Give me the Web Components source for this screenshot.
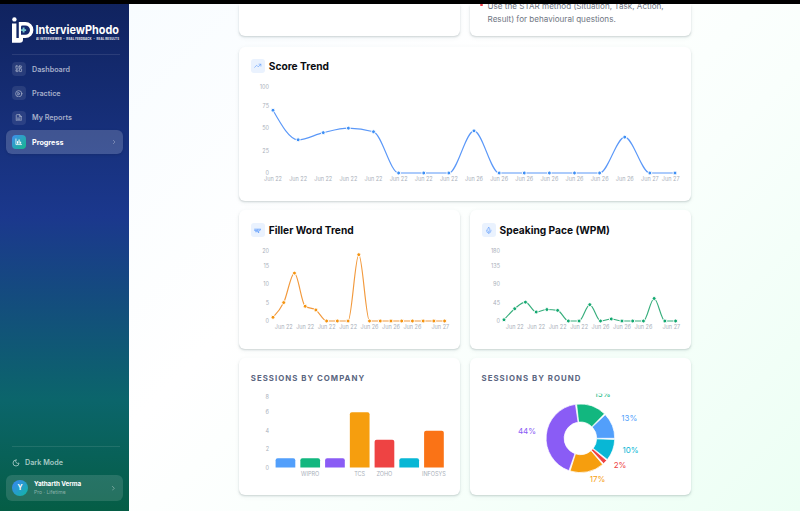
<!DOCTYPE html>
<html lang="en">
<head>
<meta charset="utf-8">
<title>InterviewPhodo</title>
<style>
  body {
    margin: 0;
    width: 800px;
    height: 511px;
    overflow: hidden;
    font-family: Inter, "Liberation Sans", sans-serif;
    background: #000;
  }
</style>
</head>
<body>
<progress-page></progress-page>

<script>
const COLORS = {
  blue: '#529ffb', green: '#12b77f', purple: '#8a5cf5', amber: '#f69e0e',
  red: '#ee4343', cyan: '#08b7d5', orange: '#fa7316'
};

const ICONS = {
  grid: '<rect x="3" y="3" width="7" height="9" rx="1"/><rect x="14" y="3" width="7" height="5" rx="1"/><rect x="14" y="12" width="7" height="9" rx="1"/><rect x="3" y="16" width="7" height="5" rx="1"/>',
  play: '<circle cx="12" cy="12" r="10"/><path d="M10 8l6 4-6 4z"/>',
  file: '<path d="M14 2H6a2 2 0 0 0-2 2v16a2 2 0 0 0 2 2h12a2 2 0 0 0 2-2V8z"/><path d="M14 2v6h6M8 13h8M8 17h8"/>',
  chart: '<path d="M3 3v18h18"/><path d="M8 17v-6M13 17V6M18 17v-4" stroke-width="3.4"/>',
  chevron: '<path d="M9 5l7 7-7 7"/>',
  moon: '<path d="M12 3a6.5 6.5 0 0 0 9 9 9 9 0 1 1-9-9z"/>',
  trend: '<path d="M22 7l-8.5 8.5-5-5L2 17"/><path d="M16 7h6v6"/>',
  filler: '<path d="M2 7h19M2 11h8M12 9v5l3 5v-7l6-3M5 15h5" stroke-width="2.6"/>',
  mic: '<path d="M12 2a3 3 0 0 0-3 3v7a3 3 0 0 0 6 0V5a3 3 0 0 0-3-3z"/><path d="M19 10v2a7 7 0 0 1-14 0v-2M12 19v3"/>'
};

function icon(name, size, width = 2) {
  return `<svg width="${size}" height="${size}" viewBox="0 0 24 24" fill="none" stroke="currentColor"
    stroke-width="${width}" stroke-linecap="round" stroke-linejoin="round">${ICONS[name]}</svg>`;
}

class BrandLogo extends HTMLElement {
  constructor() {
    super();
    this.attachShadow({ mode: 'open' });
    this.shadowRoot.innerHTML = `
      <style>
        :host { display: block; height: 28px; }
        svg { display: block; overflow: visible; }
        text { font-family: Inter, "Liberation Sans", sans-serif; fill: #fff; }
      </style>
      <svg width="111" height="28" viewBox="0 0 111 28">
        <circle cx="2.4" cy="3.4" r="2.2" fill="#fff"/>
        <path d="M0 7.5h4.4v14.6h2.4V6h6.6a7.9 7.9 0 0 1 0 16H11v1.5a3.2 3.2 0 0 1-3.2 3.2H0z" fill="#fff"/>
        <path d="M10.4 9.4h2.9a4.7 4.7 0 0 1 0 9.4H9V10.8a1.4 1.4 0 0 1 1.4-1.4z" fill="#14296e"/>
        <path d="M11.6 11.6v5M9.1 14.1h5" stroke="#79c9d2" stroke-width="1.9"/>
        <text x="23.4" y="18.3" font-size="12" font-weight="700" textLength="83.6" lengthAdjust="spacingAndGlyphs">InterviewPhodo</text>
        <text x="24" y="24.3" font-size="2.8" font-weight="800" opacity=".85" textLength="83" xml:space="preserve">AI INTERVIEWER  •  REAL FEEDBACK  •  REAL RESULTS</text>
      </svg>
    `;
  }
}
customElements.define('brand-logo', BrandLogo);

class NavItem extends HTMLElement {
  connectedCallback() {
    this.attachShadow({ mode: 'open' });
    this.shadowRoot.innerHTML = `
      <style>
        :host {
          display: flex; align-items: center; gap: 6px;
          box-sizing: border-box; height: 24.3px; padding: 0 6px; border-radius: 6px;
          font-size: 7.2px; font-weight: 600; color: #a6afca;
        }
        :host([active]) { background: rgba(255,255,255,.18); color: #fff; box-shadow: 0 1px 3px rgba(0,0,0,.12); font-weight: 700; }
        .box {
          width: 14px; height: 14px; border-radius: 4px;
          display: flex; align-items: center; justify-content: center;
          background: rgba(255,255,255,.09);
        }
        :host([active]) .box { background: linear-gradient(135deg, #3f8df0, #16b98a); }
        .label { flex: 1; }
        .chev { display: flex; opacity: .55; }
      </style>
      <span class="box">${icon(this.getAttribute('icon'), 7.5, 2.4)}</span>
      <span class="label"><slot></slot></span>
      ${this.hasAttribute('active') ? `<span class="chev">${icon('chevron', 6)}</span>` : ''}
    `;
  }
}
customElements.define('nav-item', NavItem);

class UserChip extends HTMLElement {
  connectedCallback() {
    this.attachShadow({ mode: 'open' });
    this.shadowRoot.innerHTML = `
      <style>
        :host {
          display: flex; align-items: center; gap: 6px;
          box-sizing: border-box; height: 26.5px; padding: 0 6px; border-radius: 6px;
          background: rgba(255,255,255,.13); color: #fff;
        }
        .avatar {
          width: 16px; height: 16px; border-radius: 50%;
          display: flex; align-items: center; justify-content: center;
          background: linear-gradient(135deg, #3b82f6, #10b9a0);
          font-size: 7px; font-weight: 700;
        }
        .who { flex: 1; display: flex; flex-direction: column; }
        .name { font-size: 6.3px; line-height: 8px; font-weight: 700; letter-spacing: -.07px; }
        .plan { font-size: 5.1px; line-height: 8px; color: rgba(255,255,255,.45); }
        .chev { display: flex; opacity: .65; margin-right: 1px; }
      </style>
      <span class="avatar">${this.getAttribute('initial')}</span>
      <span class="who">
        <span class="name"><slot></slot></span>
        <span class="plan">${this.getAttribute('plan')}</span>
      </span>
      <span class="chev">${icon('chevron', 6.5)}</span>
    `;
  }
}
customElements.define('user-chip', UserChip);

class SideBar extends HTMLElement {
  constructor() {
    super();
    this.attachShadow({ mode: 'open' });
    this.shadowRoot.innerHTML = `
      <style>
        :host {
          box-sizing: border-box;
          display: flex; flex-direction: column; width: 129.3px; flex: none;
          padding: 12.5px 6px 10px;
          background: linear-gradient(180deg, #10235f 0%, #1b388d 42%, #0b656b 78%, #055d45 100%);
        }
        brand-logo { margin: 0 6px; }
        hr { border: 0; height: 1px; width: 108px; margin: 0 0 0 6px; background: rgba(255,255,255,.1); }
        .top { margin-top: 10px; }
        nav { display: flex; flex-direction: column; margin-top: 2px; flex: 1; }
        .theme {
          box-sizing: border-box;
          display: flex; align-items: center; gap: 5px; height: 28px; padding: 4px 0 0 6px;
          color: #a5c9c4; font-size: 7.2px; font-weight: 600;
        }
      </style>
      <brand-logo></brand-logo>
      <hr class="top">
      <nav>
        <nav-item icon="grid">Dashboard</nav-item>
        <nav-item icon="play">Practice</nav-item>
        <nav-item icon="file">My Reports</nav-item>
        <nav-item icon="chart" active>Progress</nav-item>
      </nav>
      <hr>
      <div class="theme">${icon('moon', 8, 2.6)}<span>Dark Mode</span></div>
      <user-chip initial="Y" plan="Pro · Lifetime">Yatharth Verma</user-chip>
    `;
  }
}
customElements.define('side-bar', SideBar);

class DashCard extends HTMLElement {
  connectedCallback() {
    this.attachShadow({ mode: 'open' });
    const heading = this.getAttribute('heading');
    const caption = this.getAttribute('caption');
    const name = this.getAttribute('icon');
    this.shadowRoot.innerHTML = `
      <style>
        :host {
          box-sizing: border-box;
          display: block; flex: 1; min-width: 0; padding: 12px; border-radius: 6px;
          background: #fff;
          box-shadow: 0 1.8px 2px -.9px rgba(15,40,50,.17), 0 1.5px 5px rgba(20,80,80,.055);
        }
        header { display: flex; align-items: center; gap: 4px; height: 14px; }
        .box {
          width: 14px; height: 14px; border-radius: 3px; background: #eaf2fe; color: #649ffb;
          display: flex; align-items: center; justify-content: center;
        }
        h2 { margin: 0; font-size: 10.2px; font-weight: 650; color: #0b0d12; white-space: nowrap; }
        h3 { margin: 0; font-size: 7.8px; line-height: 14px; font-weight: 700; letter-spacing: 1.03px; color: #5a6580; text-transform: uppercase; white-space: nowrap; }
        .body { margin-top: 6px; }
        h3 + .body { margin-top: 4.5px; }
        .plain { margin-top: 0; }
      </style>
      ${heading ? `<header><span class="box">${icon(name, 7.5)}</span><h2>${heading}</h2></header>` : ''}
      ${caption ? `<h3>${caption}</h3>` : ''}
      <div class="body ${heading || caption ? '' : 'plain'}"><slot></slot></div>
    `;
  }
}
customElements.define('dash-card', DashCard);

const CHART_STYLE = `
  :host { display: block; }
  svg { display: block; }
  text { font-family: Inter, "Liberation Sans", sans-serif; }
  .tick { font-size: 5.5px; fill: #a9afba; }
`;

// Monotone cubic through evenly spaced points
function monotonePath(pts) {
  const n = pts.length;
  const h = pts[1][0] - pts[0][0];
  const slope = i => (pts[i + 1][1] - pts[i][1]) / h;
  const m = pts.map((p, i) => {
    if (i === 0 || i === n - 1) return 0;
    const a = slope(i - 1), b = slope(i);
    return (Math.sign(a) + Math.sign(b)) * Math.min(Math.abs(a), Math.abs(b), 0.25 * Math.abs(a + b)) || 0;
  });
  m[0] = (3 * slope(0) - m[1]) / 2;
  m[n - 1] = (3 * slope(n - 2) - m[n - 2]) / 2;
  let d = `M${pts[0]}`;
  for (let i = 0; i < n - 1; i++) {
    const [x0, y0] = pts[i], [x1, y1] = pts[i + 1];
    d += `C${x0 + h / 3},${y0 + m[i] * h / 3} ${x1 - h / 3},${y1 - m[i + 1] * h / 3} ${x1},${y1}`;
  }
  return d;
}

function yTicks(ticks, max, top, bottom) {
  return ticks.map(t => {
    let y = bottom - (bottom - top) * t / max;
    // top label is kept inside the drawing area
    if (t === max) y += 3.4;
    return `<text class="tick" x="18" y="${y + 2}" text-anchor="end">${t}</text>`;
  }).join('');
}

class LineChart extends HTMLElement {
  connectedCallback() {
    this.attachShadow({ mode: 'open' });
    const values = JSON.parse(this.getAttribute('values'));
    const ticks = JSON.parse(this.getAttribute('ticks'));
    const labels = JSON.parse(this.getAttribute('labels'));
    const color = this.getAttribute('color');
    const w = +this.getAttribute('width');
    const bottom = +this.getAttribute('base');
    const top = 4.3, left = 22, right = w - 4;
    const max = ticks[ticks.length - 1];
    const pts = values.map((v, i) => [
      left + (right - left) * i / (values.length - 1),
      bottom - (bottom - top) * v / max
    ]);
    this.shadowRoot.innerHTML = `
      <style>${CHART_STYLE}</style>
      <svg width="${w}" height="${bottom + 14}" viewBox="0 0 ${w} ${bottom + 14}" overflow="visible">
        ${yTicks(ticks, max, top, bottom)}
        ${labels.map(([i, t]) => {
          const x = i === values.length - 1 ? right - 4.3 : pts[i][0];
          return `<text class="tick" x="${x}" y="${bottom + 8}" text-anchor="middle">${t}</text>`;
        }).join('')}
        <path d="${monotonePath(pts)}" fill="none" stroke="${color}" stroke-width="1.15"/>
        ${pts.map(p => `<circle cx="${p[0]}" cy="${p[1]}" r="1.95" fill="${this.getAttribute('dot')}" stroke="#fff" stroke-width=".95"/>`).join('')}
      </svg>
    `;
  }
}
customElements.define('line-chart', LineChart);

class BarChart extends HTMLElement {
  connectedCallback() {
    this.attachShadow({ mode: 'open' });
    const bars = [
      ['', 1, COLORS.blue], ['WIPRO', 1, COLORS.green], ['', 1, COLORS.purple], ['TCS', 6, COLORS.amber],
      ['ZOHO', 3, COLORS.red], ['', 1, COLORS.cyan], ['INFOSYS', 4, COLORS.orange]
    ];
    const top = 3.8, bottom = 77.5, left = 22, band = 24.75, bw = 19.7;
    this.shadowRoot.innerHTML = `
      <style>${CHART_STYLE}</style>
      <svg width="197" height="92" viewBox="0 0 197 92" overflow="visible">
        ${yTicks([0, 2, 4, 6, 8], 8, top, bottom)}
        ${bars.map(([label, v, c], i) => {
          const x = left + band * i + 2.6, h = (bottom - top) * v / 8;
          return `<path d="M${x} ${bottom}v${2 - h}a2 2 0 0 1 2-2h${bw - 4}a2 2 0 0 1 2 2v${h - 2}z" fill="${c}"/>
            <text class="tick" x="${x + bw / 2}" y="${bottom + 8}" text-anchor="middle">${label}</text>`;
        }).join('')}
      </svg>
    `;
  }
}
customElements.define('bar-chart', BarChart);

class DonutChart extends HTMLElement {
  connectedCallback() {
    this.attachShadow({ mode: 'open' });
    // sessions, colour, label position
    const slices = [
      [6, COLORS.blue, '13%', 147.4, 31], [7, COLORS.green, '15%', 120.6, 7],
      [21, COLORS.purple, '44%', 45, 43.8], [8, COLORS.amber, '17%', 115.6, 91.9],
      [1, COLORS.red, '2%', 138, 78.3], [5, COLORS.cyan, '10%', 148.5, 63.3]
    ];
    const cx = 98.4, cy = 48.3, R = 34.3, r = 16.3, pad = 2;
    const total = slices.reduce((s, a) => s + a[0], 0);
    const at = (deg, rad) => {
      const a = deg * Math.PI / 180;
      return `${cx + rad * Math.cos(a)} ${cy - rad * Math.sin(a)}`;
    };
    let start = 0;
    const arcs = slices.map(([n, c]) => {
      const end = start + (360 - pad * slices.length) * n / total;
      const big = end - start > 180 ? 1 : 0;
      const d = `M${at(start, R)}A${R} ${R} 0 ${big} 0 ${at(end, R)}L${at(end, r)}A${r} ${r} 0 ${big} 1 ${at(start, r)}z`;
      start = end + pad;
      return `<path d="${d}" fill="${c}" stroke="#fff" stroke-width=".7"/>`;
    }).join('');
    this.shadowRoot.innerHTML = `
      <style>${CHART_STYLE}
        svg { overflow: hidden; }
        .pct { font-size: 8px; }
      </style>
      <svg width="197" height="100" viewBox="0 0 197 100">
        <clipPath id="area"><rect x="0" y="3.8" width="197" height="95"/></clipPath>
        <g clip-path="url(#area)">
          ${arcs}
          ${slices.map(([, c, t, x, y]) => `<text class="pct" x="${x}" y="${y}" text-anchor="middle" fill="${c}">${t}</text>`).join('')}
        </g>
      </svg>
    `;
  }
}
customElements.define('donut-chart', DonutChart);

class ProgressPage extends HTMLElement {
  constructor() {
    super();
    this.attachShadow({ mode: 'open' });
    const every = Array.from({ length: 17 }, (_, i) => [i, i < 8 ? 'Jun 22' : i < 15 ? 'Jun 26' : 'Jun 27']);
    const sparse = [1, 3, 5, 7, 9, 11, 13, 16].map(i => every[i]);
    this.shadowRoot.innerHTML = `
      <style>
        :host { box-sizing: border-box; display: flex; height: 511px; padding-top: 3.5px; background: #000; }
        main {
          box-sizing: border-box;
          flex: 1; display: flex; flex-direction: column; gap: 9.5px;
          padding: 0 109px 0 109.5px; overflow: hidden;
          background: linear-gradient(135deg, #f8fcff 0%, #fff 36%, #f9fffc 62%, #ecfff4 100%);
        }
        .row { display: flex; gap: 9.3px; flex: none; }
        .tips { height: 32.8px; margin-bottom: 1px; }
        .tips dash-card { border-radius: 0 0 6px 6px; padding-top: 0; }
        .score { height: 154px; }
        .trends { height: 138.5px; }
        .trends dash-card { padding-top: 13px; }
        .counts { height: 136.5px; }
        .counts dash-card { padding-top: 13px; }
        ul { margin: -3.7px 0 0; padding: 0 0 0 6px; list-style: none; font-size: 8.1px; line-height: 13.3px; color: #6f7683; white-space: nowrap; }
        li { position: relative; }
        li::before { content: ""; position: absolute; left: -7.6px; top: 4px; width: 2.6px; height: 2.6px; border-radius: 50%; background: #ef3b46; }
      </style>
      <side-bar></side-bar>
      <main>
        <div class="row tips">
          <dash-card></dash-card>
          <dash-card><ul><li>Use the STAR method (Situation, Task, Action,<br>Result) for behavioural questions.</li></ul></dash-card>
        </div>
        <div class="row score">
          <dash-card heading="Score Trend" icon="trend">
            <line-chart width="428" base="94" color="#5b98f8" dot="#3d8ff5" ticks="[0,25,50,75,100]"
              values="[70,37,45,50,46,0,0,0,47,0,0,0,0,0,40,0,0]" labels='${JSON.stringify(every)}'></line-chart>
          </dash-card>
        </div>
        <div class="row trends">
          <dash-card heading="Filler Word Trend" icon="filler">
            <line-chart width="197.6" base="78" color="#f2993c" dot="#f5930f" ticks="[0,5,10,15,20]"
              values="[1,5,13,4,3,0,0,0,18,0,0,0,0,0,0,0,0]" labels='${JSON.stringify(sparse)}'></line-chart>
          </dash-card>
          <dash-card heading="Speaking Pace (WPM)" icon="mic">
            <line-chart width="197.6" base="78" color="#37ae7c" dot="#12a870" ticks="[0,45,90,135,180]"
              values="[3,30,46,22,28,26,0,0,40,0,5,0,0,0,55,0,0]" labels='${JSON.stringify(sparse)}'></line-chart>
          </dash-card>
        </div>
        <div class="row counts">
          <dash-card caption="Sessions by Company"><bar-chart></bar-chart></dash-card>
          <dash-card caption="Sessions by Round"><donut-chart></donut-chart></dash-card>
        </div>
      </main>
    `;
  }
}
customElements.define('progress-page', ProgressPage);
</script>
</body>
</html>
